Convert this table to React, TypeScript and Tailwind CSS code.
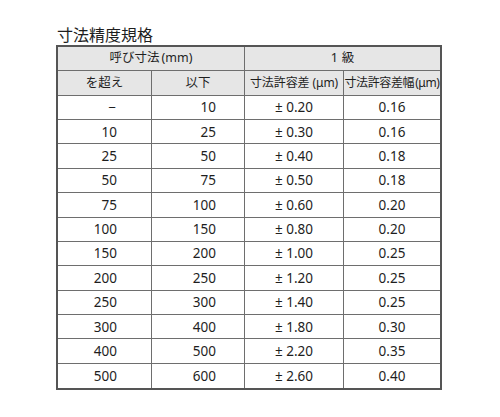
const rows: [string, string, string, string][] = [
  ['−', '10', '± 0.20', '0.16'],
  ['10', '25', '± 0.30', '0.16'],
  ['25', '50', '± 0.40', '0.18'],
  ['50', '75', '± 0.50', '0.18'],
  ['75', '100', '± 0.60', '0.20'],
  ['100', '150', '± 0.80', '0.20'],
  ['150', '200', '± 1.00', '0.25'],
  ['200', '250', '± 1.20', '0.25'],
  ['250', '300', '± 1.40', '0.25'],
  ['300', '400', '± 1.80', '0.30'],
  ['400', '500', '± 2.20', '0.35'],
  ['500', '600', '± 2.60', '0.40'],
];

const cell = 'h-[24.36px] flex items-center border-[#6e6e6e]';
const head = 'bg-[#e6e6e6]';

export default function App() {
  return (
    <div
      className="w-[500px] h-[417px] bg-white pl-[56px] pt-[25px] text-[#1e1e1e]"
      style={{ fontFamily: '"Noto Sans", "Noto Sans CJK JP", sans-serif' }}
    >
      {/* Title */}
      <div className="h-[20px] leading-[20px] text-[16px] pl-[1px]">寸法精度規格</div>

      {/* Table */}
      <div className="w-[386px] border-2 border-[#555] grid grid-cols-[94px_93px_99px_96px] text-[13.5px]">
        {/* Header row 1 */}
        <div className={`${cell} ${head} text-[12.5px] col-span-2 justify-center border-r border-b`}>
          呼び寸法<span className="ml-[2px]">(mm)</span>
        </div>
        <div className={`${cell} ${head} text-[12.5px] col-span-2 justify-center border-b`}>
          1<span className="ml-[4px]">級</span>
        </div>

        {/* Header row 2 */}
        <div className={`${cell} ${head} text-[12.5px] justify-center border-r border-b`}>を超え</div>
        <div className={`${cell} ${head} text-[12.5px] justify-center border-r border-b`}>以下</div>
        <div className={`${cell} ${head} text-[12px] justify-center border-r border-b tracking-[-0.1px]`}>
          寸法許容差<span className="ml-[3px]">(μm)</span>
        </div>
        <div className={`${cell} ${head} text-[12px] justify-center border-b tracking-[-0.4px]`}>
          寸法許容差幅<span className="ml-[1px]">(μm)</span>
        </div>

        {/* Data rows */}
        {rows.map((r, i) => {
          const last = i === rows.length - 1;
          const b = last ? '' : 'border-b';
          return [
            <div key={`a${i}`} className={`${cell} ${b} border-r justify-end ${i === 0 ? 'pr-[35px]' : 'pr-[34px]'}`}>
              {r[0]}
            </div>,
            <div key={`b${i}`} className={`${cell} ${b} border-r justify-end pr-[28px]`}>{r[1]}</div>,
            <div key={`c${i}`} className={`${cell} ${b} border-r justify-center`}>{r[2]}</div>,
            <div key={`d${i}`} className={`${cell} ${b} justify-center`}>{r[3]}</div>,
          ];
        })}
      </div>
    </div>
  );
}
